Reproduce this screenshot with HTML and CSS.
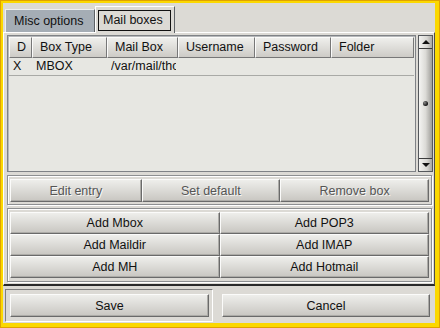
FILE: index.html
```html
<!DOCTYPE html>
<html lang="en">
<head>
    <meta charset="UTF-8">
    <title>Mail boxes</title>
    <link rel="stylesheet" href="styles.css">
</head>
<body>

<div class="screen">
<div class="window">

    <div class="tabs">
        <div class="tab tab-off">Misc options</div>
        <div class="tab tab-on"><span class="focus">Mail boxes</span></div>
    </div>

    <div class="page">
        <div class="list-row">
            <div class="list">
                <div class="list-head">
                    <div class="col c-d">D</div>
                    <div class="col c-type">Box Type</div>
                    <div class="col c-box">Mail Box</div>
                    <div class="col c-user">Username</div>
                    <div class="col c-pass">Password</div>
                    <div class="col c-folder">Folder</div>
                </div>
                <div class="list-item">
                    <div class="cell c-d">X</div>
                    <div class="cell c-type">MBOX</div>
                    <div class="cell c-box"><span class="clip">/var/mail/thomas</span></div>
                    <div class="cell c-user"></div>
                    <div class="cell c-pass"></div>
                    <div class="cell c-folder"></div>
                </div>
            </div>
            <div class="scrollbar">
                <div class="sb-btn sb-up"><span class="arrow-up"></span></div>
                <div class="sb-slider"><span class="grip"></span></div>
                <div class="sb-btn sb-down"><span class="arrow-down"></span></div>
            </div>
        </div>

        <div class="group group-edit">
            <button class="btn btn-off">Edit entry</button>
            <button class="btn btn-off">Set default</button>
            <button class="btn btn-off">Remove box</button>
        </div>

        <div class="group group-add">
            <button class="btn">Add Mbox</button>
            <button class="btn">Add POP3</button>
            <button class="btn">Add Maildir</button>
            <button class="btn">Add IMAP</button>
            <button class="btn">Add MH</button>
            <button class="btn">Add Hotmail</button>
        </div>
    </div>

    <div class="actions">
        <div class="default-frame">
            <button class="btn btn-save">Save</button>
        </div>
        <button class="btn btn-cancel">Cancel</button>
    </div>

</div>
</div>

</body>
</html>
```

FILE: styles.css
```css
body {
    margin: 0;
    padding: 0;
    font-family: "Liberation Sans", Arial, sans-serif;
    font-size: 12.5px;
    color: #111;
}

.screen {
    width: 440px;
    height: 328px;
    box-sizing: border-box;
    padding: 1px;
    background-color: #e0a200;
}

.window {
    width: 438px;
    height: 326px;
    box-sizing: border-box;
    border-style: solid;
    border-color: #fbd800;
    border-width: 2px 4px 4px 2px;
    background-color: #dcdad5;
    display: flex;
    flex-direction: column;
}

/* tabs */
.tabs {
    height: 29px;
    flex: none;
    display: flex;
    align-items: flex-end;
    padding-left: 2px;
}

.tab {
    box-sizing: border-box;
    border-top: 1px solid #eef0f2;
    border-left: 1px solid #eef0f2;
    border-right: 1px solid #5e6266;
}

.tab-off {
    width: 90px;
    height: 23px;
    background-color: #a5adb5;
    padding-left: 8px;
    line-height: 22px;
}

.tab-on {
    width: 80px;
    height: 27px;
    margin-bottom: -1px;
    position: relative;
    z-index: 1;
    background-color: #dcdad5;
    border-top-color: #fff;
    border-left-color: #fff;
    padding: 3px 3px 0 2px;
}

.focus {
    display: block;
    box-sizing: border-box;
    height: 21px;
    border: 1px solid #111;
    padding-left: 4px;
    line-height: 18px;
    white-space: nowrap;
}

/* notebook page */
.page {
    flex: none;
    height: 254px;
    box-sizing: border-box;
    border-top: 1px solid #fff;
    border-left: 1px solid #fff;
    border-right: 1px solid #4c4c4c;
    border-bottom: 2px solid #2a2a2a;
    padding: 2px 1px 2px 3px;
}

.list-row {
    display: flex;
    height: 137px;
}

.list {
    width: 409px;
    box-sizing: border-box;
    border: 1px solid #7f8286;
    padding: 1px;
    box-shadow: inset 1px 1px 0 #b6b8ba;
    background-color: #e7e7e2;
}

.list-head {
    display: flex;
    height: 21px;
}

.col {
    box-sizing: border-box;
    border: 1px solid;
    border-color: #fbfbfa #777 #777 #fbfbfa;
    background: linear-gradient(#efefec, #cdcbc6);
    padding-left: 7px;
    line-height: 19px;
    white-space: nowrap;
    overflow: hidden;
}

.c-d { width: 23px; }
.c-type { width: 75px; }
.c-box { width: 71px; }
.c-user { width: 77px; }
.c-pass { width: 76px; }
.c-folder { width: 83px; }

.list-item {
    display: flex;
    height: 17px;
    border-bottom: 1px solid #a9aaa6;
}

.cell {
    box-sizing: border-box;
    padding-left: 4px;
    line-height: 17px;
    white-space: nowrap;
}

.clip {
    display: block;
    width: 65px;
    overflow: hidden;
}

/* scrollbar */
.scrollbar {
    margin-left: 2px;
    width: 15px;
    box-sizing: border-box;
    border: 1px solid #55585c;
    display: flex;
    flex-direction: column;
    background-color: #b9b8b4;
}

.sb-btn {
    height: 12px;
    flex: none;
    background: linear-gradient(90deg, #f2f2f0, #d8d7d3 60%, #a8a7a3);
    display: flex;
    align-items: center;
    justify-content: center;
}

.sb-up {
    border-bottom: 1px solid #3c3c3c;
}

.sb-down {
    border-top: 1px solid #3c3c3c;
}

.arrow-up {
    width: 0;
    height: 0;
    border-left: 4px solid transparent;
    border-right: 4px solid transparent;
    border-bottom: 4px solid #111;
}

.arrow-down {
    width: 0;
    height: 0;
    border-left: 4px solid transparent;
    border-right: 4px solid transparent;
    border-top: 4px solid #111;
}

.sb-slider {
    flex: 1;
    background: linear-gradient(90deg, #f4f4f2, #dcdbd7 50%, #9e9d99);
    display: flex;
    align-items: center;
    justify-content: center;
}

.grip {
    width: 5px;
    height: 5px;
    border-radius: 50%;
    background: radial-gradient(circle at 35% 35%, #8a8a8a, #111 70%);
}

/* button groups */
.group {
    box-sizing: border-box;
    margin-top: 3px;
    margin-right: 1px;
    border: 1px solid #8d8f91;
    box-shadow: inset 1px 1px 0 #fff, 1px 1px 0 #fff;
    padding: 3px 2px 2px 2px;
}

.group-edit {
    height: 30px;
    display: flex;
}

.group-edit .btn {
    flex: 1 1 auto;
}

.group-add {
    height: 74px;
    padding-bottom: 3px;
    display: grid;
    grid-template-columns: 1fr 1fr;
    grid-template-rows: 22px 22px 22px;
}

.btn {
    box-sizing: border-box;
    margin: 0;
    padding: 0;
    font-family: "Liberation Sans", Arial, sans-serif;
    font-size: 12.5px;
    color: #111;
    border: 1px solid;
    border-color: #fbfbfa #6a6a6a #6a6a6a #fbfbfa;
    box-shadow: inset -1px -1px 0 #acaba7;
    background: linear-gradient(#eeeeeb, #c8c6c1);
    cursor: pointer;
}

.btn-off {
    color: #555;
    text-shadow: 1px 1px 0 #f6f6f4;
}

/* bottom actions */
.actions {
    flex: 1;
    display: flex;
    align-items: flex-start;
    padding: 3px 0 0 2px;
}

.default-frame {
    width: 208px;
    height: 33px;
    box-sizing: border-box;
    border: 1px solid;
    border-color: #7e7e7e #fff #fff #7e7e7e;
    padding: 4px 3px 4px 4px;
    display: flex;
}

.btn-save {
    flex: 1;
    height: 23px;
}

.btn-cancel {
    width: 208px;
    height: 23px;
    margin: 5px 0 0 9px;
}
```
